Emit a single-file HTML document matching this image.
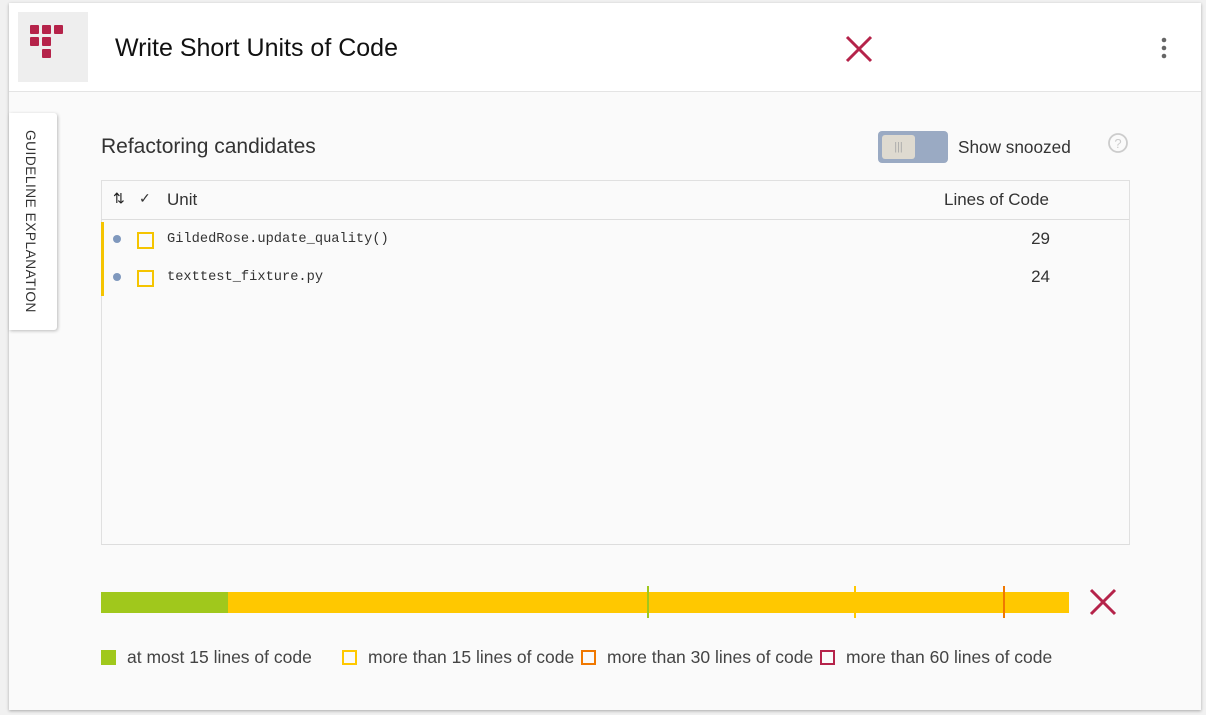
<!DOCTYPE html>
<html><head><meta charset="utf-8"><style>
body{margin:0;width:1206px;height:715px;background:#f1f1f1;font-family:"Liberation Sans",sans-serif;position:relative;overflow:hidden;color:#333}
.card{position:absolute;left:9px;top:3px;width:1192px;height:707px;background:#fafafa;box-shadow:0 1px 3px rgba(0,0,0,.3)}
.hdr{position:absolute;left:0;top:0;width:1192px;height:88px;background:#fff;border-bottom:1px solid #e4e4e4}
.logo{position:absolute;left:9px;top:9px;width:70px;height:70px;background:#eee}
.sq{position:absolute;width:9px;height:9px;background:#b5234a;border-radius:1px}
.a{position:absolute}
.tab{position:absolute;left:0;top:110px;width:48px;height:217px;background:#fff;box-shadow:1px 1px 3px rgba(0,0,0,.25);border-radius:0 3px 3px 0}
.mono{font-family:"Liberation Mono",monospace;font-size:13.7px;color:#333}
.leg{position:absolute;top:644px;font-size:17.5px;color:#444;white-space:nowrap}
.leg i{display:inline-block;width:15px;height:15px;box-sizing:border-box;vertical-align:-2px;margin-right:11px}
</style></head><body>
<div class="card">
<div class="hdr">
 <div class="logo">
  <div class="sq" style="left:12px;top:13px"></div><div class="sq" style="left:24px;top:13px"></div><div class="sq" style="left:36px;top:13px"></div>
  <div class="sq" style="left:12px;top:25px"></div><div class="sq" style="left:24px;top:25px"></div>
  <div class="sq" style="left:24px;top:37px"></div>
 </div>
 <div class="a" style="left:106px;top:31px;font-size:25px;color:#111">Write Short Units of Code</div>
 <svg class="a" style="left:835px;top:31px" width="30" height="30"><path d="M3 3L27 27M27 3L3 27" stroke="#b5234a" stroke-width="3"/></svg>
 <svg class="a" style="left:1150px;top:33px" width="10" height="26"><circle cx="5" cy="4" r="2.3" fill="#666"/><circle cx="5" cy="12" r="2.3" fill="#666"/><circle cx="5" cy="20" r="2.3" fill="#666"/></svg>
</div>
<div class="tab"><div class="a" style="left:14px;top:17px;writing-mode:vertical-rl;font-size:13.7px;letter-spacing:.5px;color:#333">GUIDELINE EXPLANATION</div></div>
<div class="a" style="left:92px;top:132px;font-size:21px;color:#333">Refactoring candidates</div>
<div class="a" style="left:869px;top:128px;width:70px;height:32px;background:#9aaac3;border-radius:4px"><div class="a" style="left:4px;top:4px;width:33px;height:24px;background:#dedad0;border-radius:3px;color:#aaa;font-size:11px;text-align:center;line-height:24px">|||</div></div>
<div class="a" style="left:949px;top:134px;font-size:17.2px;color:#333">Show snoozed</div>
<svg class="a" style="left:1098px;top:129px" width="22" height="22"><circle cx="11" cy="11" r="9" fill="none" stroke="#ccc" stroke-width="1.8"/><text x="11" y="16" font-size="13" text-anchor="middle" fill="#ccc" font-family="Liberation Sans">?</text></svg>
<div class="a" style="left:92px;top:177px;width:1027px;height:363px;border:1px solid #e0e0e0;border-bottom-color:#ddd"></div>
<div class="a" style="left:92px;top:216px;width:1028px;height:1px;background:#ddd"></div>
<div class="a" style="left:104px;top:187px;font-size:14px;color:#222">⇅</div>
<div class="a" style="left:130px;top:187px;font-size:14px;color:#333">✓</div>
<div class="a" style="left:158px;top:187px;font-size:17px;color:#333">Unit</div>
<div class="a" style="left:935px;top:187px;font-size:17px;color:#333">Lines of Code</div>
<div class="a" style="left:92px;top:219px;width:3px;height:74px;background:#f5c400"></div>
<div class="a" style="left:104px;top:232px;width:8px;height:8px;border-radius:50%;background:#7f98bd"></div>
<div class="a" style="left:104px;top:270px;width:8px;height:8px;border-radius:50%;background:#7f98bd"></div>
<div class="a" style="left:128px;top:229px;width:17px;height:17px;box-sizing:border-box;border:2px solid #f5c400"></div>
<div class="a" style="left:128px;top:267px;width:17px;height:17px;box-sizing:border-box;border:2px solid #f5c400"></div>
<div class="a mono" style="left:158px;top:229px">GildedRose.update_quality()</div>
<div class="a mono" style="left:158px;top:267px">texttest_fixture.py</div>
<div class="a" style="left:1000px;width:41px;text-align:right;top:226px;font-size:17px">29</div>
<div class="a" style="left:1000px;width:41px;text-align:right;top:264px;font-size:17px">24</div>
<div class="a" style="left:92px;top:589px;width:127px;height:21px;background:#a0c81c"></div>
<div class="a" style="left:219px;top:589px;width:841px;height:21px;background:#ffc800"></div>
<div class="a" style="left:638px;top:583px;width:2px;height:32px;background:#a0c81c"></div>
<div class="a" style="left:845px;top:583px;width:2px;height:32px;background:#ffc800"></div>
<div class="a" style="left:994px;top:583px;width:2px;height:32px;background:#f07800"></div>
<svg class="a" style="left:1080px;top:585px" width="28" height="28"><path d="M2 2L26 26M26 2L2 26" stroke="#b5234a" stroke-width="3"/></svg>
<div class="leg" style="left:92px"><i style="background:#a0c81c"></i>at most 15 lines of code</div>
<div class="leg" style="left:333px"><i style="border:2px solid #ffc800"></i>more than 15 lines of code</div>
<div class="leg" style="left:572px"><i style="border:2px solid #f07800"></i>more than 30 lines of code</div>
<div class="leg" style="left:811px"><i style="border:2px solid #b5234a"></i>more than 60 lines of code</div>
</div>
</body></html>
